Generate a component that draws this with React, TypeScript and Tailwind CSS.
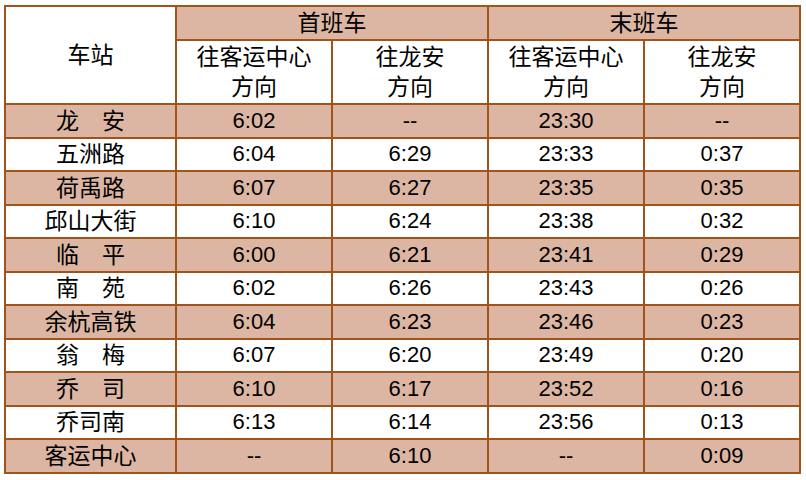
const rows: [string, string, string, string, string][] = [
  ["龙\u3000安", "6:02", "--", "23:30", "--"],
  ["五洲路", "6:04", "6:29", "23:33", "0:37"],
  ["荷禹路", "6:07", "6:27", "23:35", "0:35"],
  ["邱山大街", "6:10", "6:24", "23:38", "0:32"],
  ["临\u3000平", "6:00", "6:21", "23:41", "0:29"],
  ["南\u3000苑", "6:02", "6:26", "23:43", "0:26"],
  ["余杭高铁", "6:04", "6:23", "23:46", "0:23"],
  ["翁\u3000梅", "6:07", "6:20", "23:49", "0:20"],
  ["乔\u3000司", "6:10", "6:17", "23:52", "0:16"],
  ["乔司南", "6:13", "6:14", "23:56", "0:13"],
  ["客运中心", "--", "6:10", "--", "0:09"],
];

const cell = "border-2 border-[#a0531b] text-center align-middle p-0";

export default function App() {
  return (
    <div className="h-[480px] w-[806px] bg-white pl-[4px] pt-[5px]">
      <table
        className="w-[795px] table-fixed border-collapse text-[22px] leading-[30px] text-black"
        style={{ fontFamily: '"Liberation Sans", "Noto Sans CJK SC", sans-serif' }}
      >
        <colgroup>
          <col className="w-[171px]" />
          <col className="w-[156px]" />
          <col className="w-[156px]" />
          <col className="w-[156px]" />
          <col className="w-[156px]" />
        </colgroup>
        <thead>
          <tr className="h-[34px]">
            <th rowSpan={2} className={`${cell} bg-white font-normal text-[23px]`}>
              车站
            </th>
            <th colSpan={2} className={`${cell} bg-[#dcb6a2] font-normal text-[23px]`}>
              首班车
            </th>
            <th colSpan={2} className={`${cell} bg-[#dcb6a2] font-normal text-[23px]`}>
              末班车
            </th>
          </tr>
          <tr className="h-[64px]">
            <th className={`${cell} bg-white font-normal text-[23px]`}>
              往客运中心
              <br />
              方向
            </th>
            <th className={`${cell} bg-white font-normal text-[23px]`}>
              往龙安
              <br />
              方向
            </th>
            <th className={`${cell} bg-white font-normal text-[23px]`}>
              往客运中心
              <br />
              方向
            </th>
            <th className={`${cell} bg-white font-normal text-[23px]`}>
              往龙安
              <br />
              方向
            </th>
          </tr>
        </thead>
        <tbody>
          {rows.map((r, i) => (
            <tr key={r[0]} className={`h-[33.5px] ${i % 2 === 0 ? "bg-[#dcb6a2]" : "bg-white"}`}>
              <td className={`${cell} text-[23px]`}>{r[0]}</td>
              <td className={cell}>{r[1]}</td>
              <td className={cell}>{r[2]}</td>
              <td className={cell}>{r[3]}</td>
              <td className={cell}>{r[4]}</td>
            </tr>
          ))}
        </tbody>
      </table>
    </div>
  );
}
